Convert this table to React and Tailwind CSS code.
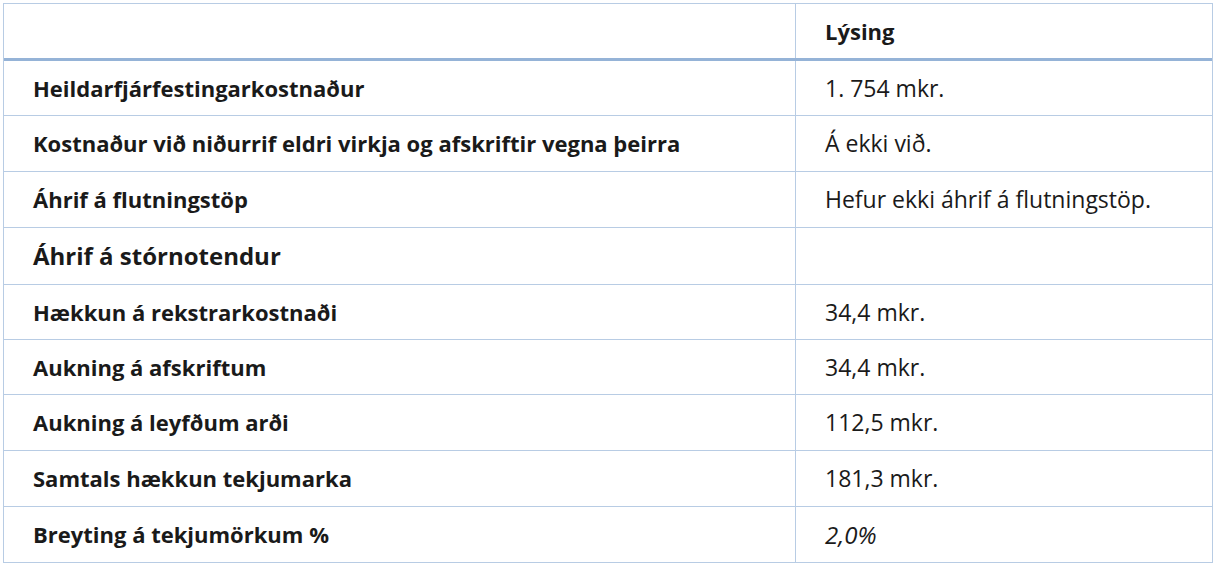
import React from 'react';

const rows = [
  { label: 'Heildarfjárfestingarkostnaður', value: '1. 754 mkr.', h: 'h-[55px]' },
  { label: 'Kostnaður við niðurrif eldri virkja og afskriftir vegna þeirra', value: 'Á ekki við.', h: 'h-[56px]' },
  { label: 'Áhrif á flutningstöp', value: 'Hefur ekki áhrif á flutningstöp.', h: 'h-[56px]' },
  { label: 'Áhrif á stórnotendur', value: '', h: 'h-[57px]', big: true },
  { label: 'Hækkun á rekstrarkostnaði', value: '34,4 mkr.', h: 'h-[55px]' },
  { label: 'Aukning á afskriftum', value: '34,4 mkr.', h: 'h-[55px]' },
  { label: 'Aukning á leyfðum arði', value: '112,5 mkr.', h: 'h-[56px]' },
  { label: 'Samtals hækkun tekjumarka', value: '181,3 mkr.', h: 'h-[56px]' },
  { label: 'Breyting á tekjumörkum %', value: '2,0%', h: 'h-[55px]', italic: true },
];

export default function App() {
  return (
    <div className="min-h-screen bg-white pt-[3px] pl-[3px] text-[#1a1a1a] font-['Open_Sans',sans-serif]">
      <div className="w-[1210px] border border-[#b8cce4]">
        <div className="flex h-[57px] border-b-[3px] border-[#95b3d7]">
          <div className="w-[792px] border-r border-[#b8cce4]" />
          <div className="flex items-center pl-[29px] text-[22px] font-bold">Lýsing</div>
        </div>
        {rows.map((r, i) => (
          <div
            key={i}
            className={`flex ${r.h} ${i < rows.length - 1 ? 'border-b border-[#b8cce4]' : ''}`}
          >
            <div
              className={`flex w-[792px] items-center border-r border-[#b8cce4] pl-[29px] font-bold ${
                r.big ? 'text-[24px]' : 'text-[22px]'
              }`}
            >
              {r.label}
            </div>
            <div className={`flex items-center pl-[29px] ${r.italic ? 'text-[24px] italic' : 'text-[23px]'}`}>
              {r.value}
            </div>
          </div>
        ))}
      </div>
    </div>
  );
}
